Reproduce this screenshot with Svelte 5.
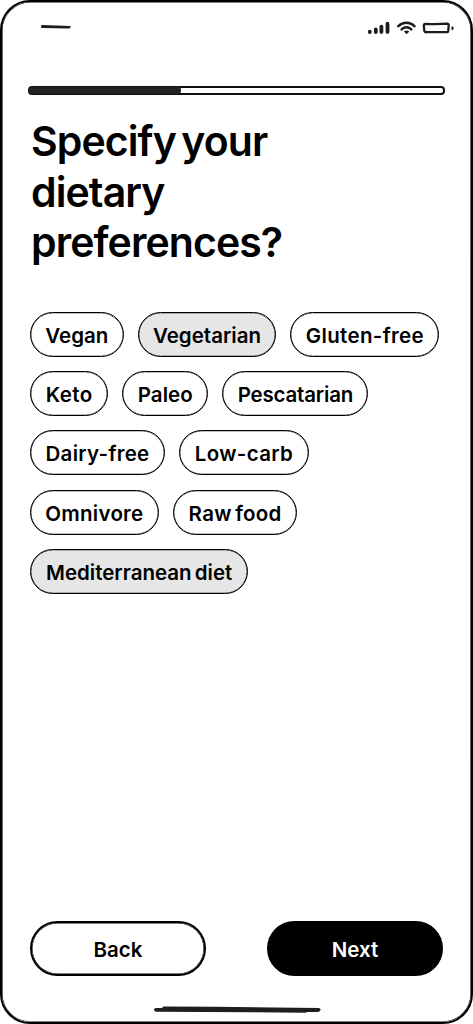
<script lang="ts">
  interface Option {
    label: string;
    width: number;
    tracking: number;
    selected: boolean;
  }

  let options = $state<Option[]>([
    { label: 'Vegan', width: 93.6, tracking: 0, selected: false },
    { label: 'Vegetarian', width: 138.8, tracking: 0, selected: true },
    { label: 'Gluten-free', width: 149, tracking: 0.33, selected: false },
    { label: 'Keto', width: 78.3, tracking: 0.45, selected: false },
    { label: 'Paleo', width: 86, tracking: 0.05, selected: false },
    { label: 'Pescatarian', width: 146.2, tracking: -0.18, selected: false },
    { label: 'Dairy-free', width: 135, tracking: 0.29, selected: false },
    { label: 'Low-carb', width: 130, tracking: 0.36, selected: false },
    { label: 'Omnivore', width: 128.8, tracking: 0.25, selected: false },
    { label: 'Raw food', width: 124.6, tracking: 0.3, selected: false },
    { label: 'Mediterranean diet', width: 218.3, tracking: 0, selected: true },
  ]);

  let progress = 36.8;

  function toggle(option: Option) {
    option.selected = !option.selected;
  }
</script>

<div class="screen">
  <header class="status-bar">
    <svg class="time" width="34" height="8" viewBox="0 0 34 8" fill="#1c1c20">
      <path d="M3.5 2.1L30.5 2.9Q32 3 31.8 4.1L30.3 5.6L3 4.9Q1.4 4.5 1.9 3.2Q2.2 2.1 3.5 2.1Z" />
    </svg>
    <svg class="indicators" width="88" height="18" viewBox="0 0 88 18" fill="none" stroke="#1c1c20" stroke-linecap="round" stroke-linejoin="round">
      <!-- signal -->
      <path d="M3.8 12.7V13.1M9.8 10.4V13M15.4 7.6V12.9M21.5 4.7V12.9" stroke-width="3.8" />
      <!-- wifi -->
      <path d="M32.3 7.1C37.2 2.7 43.6 2.6 48.5 7.1" stroke-width="2.6" />
      <path d="M35.6 10.4C38.8 7.7 42.2 7.7 45.3 10.4" stroke-width="2.5" />
      <path d="M38.8 12.6Q40.6 11.6 42.4 12.6L40.6 14.4Z" fill="#1c1c20" stroke-width="1.3" />
      <!-- battery -->
      <path d="M59.5 4.8Q70 5.4 81 4.7Q82.8 4.7 82.7 6.4L82.3 11.6Q82.2 13.2 80.5 13.2H60.5Q58.4 13.5 58.3 11.4L57.8 6.8Q57.8 4.9 59.5 4.8Z" stroke-width="2.3" />
      <path d="M86.2 7.9L87.2 9.1L86.2 10.5Z" fill="#1c1c20" stroke-width="1.3" />
    </svg>
  </header>

  <div class="progress">
    <div class="progress-fill" style="width: {progress}%"></div>
  </div>

  <h1>Specify your<br />dietary<br />preferences?</h1>

  <div class="options">
    {#each options as option}
      <button
        class="chip"
        class:selected={option.selected}
        style="width: {option.width}px; letter-spacing: {option.tracking}px"
        onclick={() => toggle(option)}
      >{option.label}</button>
    {/each}
  </div>

  <footer class="actions">
    <button class="action back">Back</button>
    <button class="action next">Next</button>
  </footer>

  <svg class="home-indicator" width="168" height="8" viewBox="0 0 168 8" fill="#1e1e20">
    <path d="M3 2.1L9 1.9Q9.5 .4 11 .4L60 .8L166 1.9Q168 2.5 167.5 4.1Q167 5.9 165 5.9L154 6Q153.5 6.8 152 6.7L100 6.3L3 5.8Q1 5.4 1 3.8Q1 2.2 3 2.1Z" />
  </svg>
</div>

<style>
  :global(body) {
    background: #fff;
  }

  .screen {
    box-sizing: border-box;
    width: 473px;
    height: 1024px;
    display: flex;
    flex-direction: column;
    border: 2px solid #000;
    border-radius: 30px;
    box-shadow: inset 0 0 0 0.6px #000;
    background: #fff;
    color: #000;
    font-family: Inter, "Liberation Sans", sans-serif;
    overflow: hidden;
  }

  .status-bar {
    display: flex;
    justify-content: space-between;
    height: 18px;
    margin: 17px 17px 0 37px;
  }

  .time {
    margin-top: 4px;
  }

  .indicators {
    overflow: visible;
  }

  .progress {
    box-sizing: border-box;
    flex: none;
    height: 9px;
    margin: 48.5px 26px 0 26px;
    border: 2px solid #111114;
    border-radius: 4px;
    background: #fff;
  }

  .progress-fill {
    height: 7px;
    margin: -1px 0 0 -1px;
    border-radius: 3px;
    background: #222224;
  }

  h1 {
    margin: 21.8px 0 0 29px;
    font-size: 41px;
    line-height: 50.5px;
    font-weight: 600;
    letter-spacing: -0.9px;
    word-spacing: -4px;
  }

  .options {
    display: flex;
    flex-wrap: wrap;
    gap: 14.2px 14px;
    margin: 44.3px 25px 0 28px;
  }

  button {
    box-sizing: border-box;
    padding: 0;
    font-family: inherit;
    font-size: 20.5px;
    font-weight: 600;
    color: #000;
    background: #fff;
    white-space: nowrap;
    cursor: pointer;
  }

  .chip {
    height: 45px;
    padding-top: 2px;
    border: 1px solid #000;
    border-radius: 23px;
    box-shadow: inset 0 0 0 0.3px #000;
    word-spacing: -2px;
  }

  .chip.selected {
    background: #e6e6e6;
  }

  .actions {
    display: flex;
    justify-content: space-between;
    margin: auto 28px 0 28px;
  }

  .action {
    width: 176px;
    height: 55px;
    padding-top: 2px;
    border: 2px solid #000;
    border-radius: 28px;
    box-shadow: inset 0 0 0 0.5px #000;
  }

  .next {
    background: #000;
    color: #fff;
  }

  .home-indicator {
    flex: none;
    align-self: center;
    margin: 30px 0 8px;
  }
</style>
